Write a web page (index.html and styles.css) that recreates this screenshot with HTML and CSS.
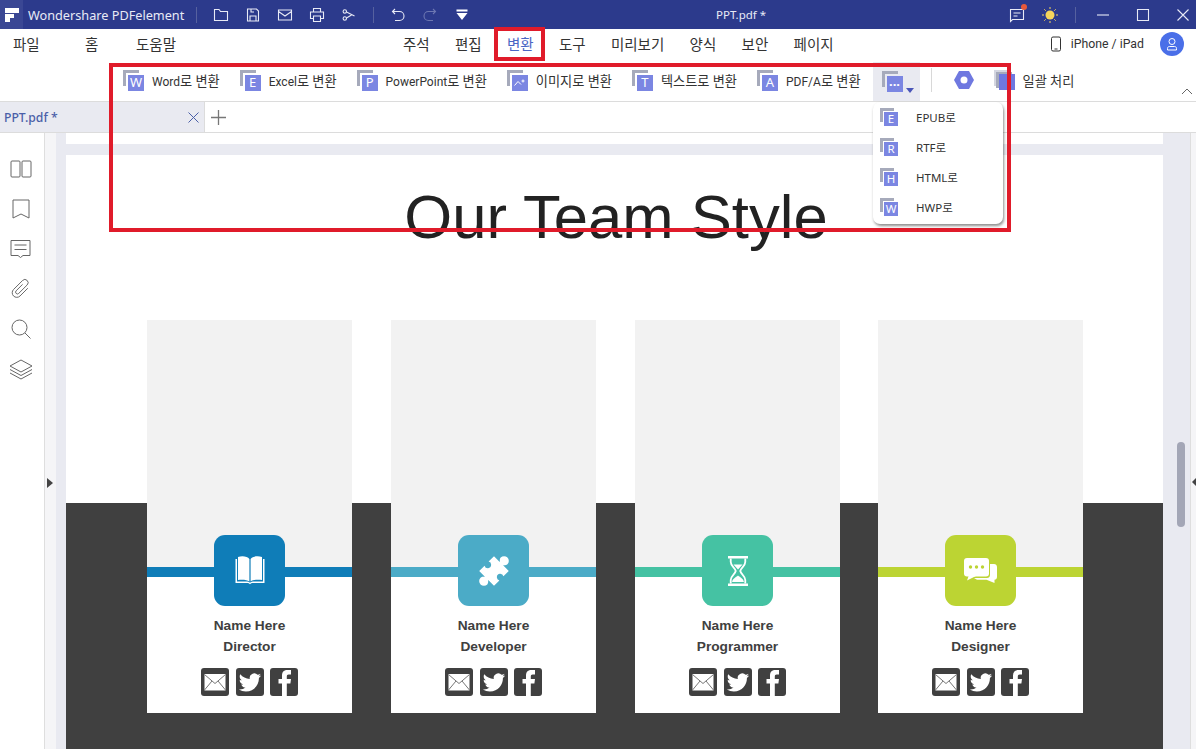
FILE: index.html

```html
<!DOCTYPE html>
<html lang="ko">
<head>
    <meta charset="UTF-8">
    <meta name="viewport" content="width=device-width, initial-scale=1.0">
    <title>PPT.pdf - Wondershare PDFelement</title>
    <link rel="stylesheet" href="styles.css">
</head>
<body>
    <svg class="sprite" width="0" height="0">
        <symbol id="i-mail" viewBox="0 0 28 28">
            <rect x="3.500" y="6" width="21" height="16.500" fill="#fff"/>
            <path d="M3.500 6.500 14 15.500 24.500 6.500M3.500 22 11 13M24.500 22 17 13" fill="none" stroke="#777" stroke-width="1"/>
        </symbol>
        <symbol id="i-twitter" viewBox="-3 -3.500 30 30">
            <path fill="#fff" d="M23.953 4.57a10 10 0 01-2.825.775 4.958 4.958 0 002.163-2.723c-.951.555-2.005.959-3.127 1.184a4.92 4.92 0 00-8.384 4.482C7.69 8.095 4.067 6.13 1.64 3.162a4.822 4.822 0 00-.666 2.475c0 1.71.87 3.213 2.188 4.096a4.904 4.904 0 01-2.228-.616v.06a4.923 4.923 0 003.946 4.827 4.996 4.996 0 01-2.212.085 4.936 4.936 0 004.604 3.417 9.867 9.867 0 01-6.102 2.105c-.39 0-.779-.023-1.17-.067a13.995 13.995 0 007.557 2.209c9.053 0 13.998-7.496 13.998-13.985 0-.21 0-.42-.015-.63A9.935 9.935 0 0024 4.59z"/>
        </symbol>
        <symbol id="i-facebook" viewBox="0 0 28 28">
            <path fill="#fff" d="M12 28V15.500H8.500v-4.500H12V7.500c0-3.800 2.200-5.500 5.600-5.500H21v4.500h-2.300c-1.400 0-1.900.7-1.900 2V11H21l-.6 4.500h-3.600V28z"/>
        </symbol>
    </svg>

    <div class="app">
        <header class="titlebar">
            <div class="title-left">
                <div class="logo">
                    <svg width="14" height="14" viewBox="0 0 14 14"><path fill="#fff" d="M0 0h14v5H0zM0 6h9v4H5v4H0z"/></svg>
                </div>
                <span class="app-name">Wondershare PDFelement</span>
                <span class="title-sep"></span>
                <div class="quick-tools">
                    <svg width="16" height="16" viewBox="0 0 16 16"><path d="M1.500 13.500v-11h4.500l1.500 2h7v9z"/></svg>
                    <svg width="16" height="16" viewBox="0 0 16 16"><path d="M2.500 2h9l2 2v10h-11zM5 14V9h6v5M6 2v3h3"/></svg>
                    <svg width="16" height="16" viewBox="0 0 16 16"><path d="M1.500 3h13v10h-13zM1.500 4.500 8 9l6.500-4.500"/></svg>
                    <svg width="16" height="16" viewBox="0 0 16 16"><path d="M4.500 5V1.500h7V5M4.500 11.500h-3V5h13v6.500h-3M4.500 9h7v5.500h-7z"/></svg>
                    <svg width="16" height="16" viewBox="0 0 16 16"><path d="M5.500 5 13.500 9M5.500 11l5-3"/><circle cx="3.800" cy="4.500" r="1.700"/><circle cx="3.800" cy="11.500" r="1.700"/></svg>
                    <span class="title-sep"></span>
                    <svg width="16" height="16" viewBox="0 0 16 16"><path d="M5 2 2.500 4.500 5 7M3 4.500h6.500a4 4 0 0 1 0 9H5"/></svg>
                    <svg class="dim" width="16" height="16" viewBox="0 0 16 16"><path d="M11 2l2.500 2.500L11 7M13 4.500H6.500a4 4 0 0 0 0 9H11"/></svg>
                    <svg class="solid" width="16" height="16" viewBox="0 0 16 16"><path d="M2.500 2.500h11v2h-11zM2.500 6h11L8 13z"/></svg>
                </div>
            </div>
            <span class="doc-title">PPT.pdf *</span>
            <div class="title-right">
                <span class="notice">
                    <svg width="16" height="16" viewBox="0 0 16 16"><path d="M1.500 2.500h13v10h-11l-2 2zM4.500 6h7M4.500 9h4"/></svg>
                    <i class="notice-dot"></i>
                </span>
                <svg class="sun" width="18" height="18" viewBox="0 0 18 18">
                    <circle cx="9" cy="9" r="4.500" fill="#f6d55c"/>
                    <path d="M9 1v2M9 15v2M1 9h2M15 9h2M3.300 3.300l1.400 1.400M13.300 13.300l1.400 1.400M3.300 14.700l1.400-1.400M13.300 4.700l1.400-1.400" stroke="#f6d55c" fill="none"/>
                </svg>
                <span class="title-sep"></span>
                <div class="win-buttons">
                    <svg width="14" height="14" viewBox="0 0 14 14"><path d="M1 7h12"/></svg>
                    <svg width="14" height="14" viewBox="0 0 14 14"><path d="M1.500 1.500h11v11h-11z"/></svg>
                    <svg width="14" height="14" viewBox="0 0 14 14"><path d="M1.500 1.500l11 11M12.500 1.500l-11 11"/></svg>
                </div>
            </div>
        </header>

        <nav class="menubar">
            <div class="menu-left">
                <a class="menu-file">파일</a>
                <a class="menu-home">홈</a>
                <a>도움말</a>
            </div>
            <div class="menu-tabs">
                <a>주석</a>
                <a>편집</a>
                <a class="active">변환</a>
                <a>도구</a>
                <a>미리보기</a>
                <a>양식</a>
                <a>보안</a>
                <a>페이지</a>
            </div>
            <div class="menu-right">
                <svg width="12" height="16" viewBox="0 0 12 16" fill="none" stroke="#333"><rect x="1.500" y="1" width="9" height="14" rx="1.500"/><path d="M4.500 13h3" /></svg>
                <span class="device-link">iPhone / iPad</span>
                <span class="avatar">
                    <svg width="14" height="14" viewBox="0 0 14 14" fill="none" stroke="#fff"><circle cx="7" cy="4.500" r="3"/><path d="M2.500 13v-1.500c0-1.500 1-2 2-2h5c1 0 2 .5 2 2V13z"/></svg>
                </span>
            </div>
        </nav>

        <div class="toolbar">
            <div class="tool"><span class="file-icon">W</span><span><b>Word</b>로 변환</span></div>
            <div class="tool"><span class="file-icon">E</span><span><b>Excel</b>로 변환</span></div>
            <div class="tool"><span class="file-icon">P</span><span><b>PowerPoint</b>로 변환</span></div>
            <div class="tool">
                <span class="file-icon">
                    <svg width="11" height="7" viewBox="0 0 11 7" fill="none" stroke="#fff"><path d="M.5 6.500 4 2.500l3 3"/><circle cx="9" cy="2" r="1"/></svg>
                </span><span>이미지로 변환</span>
            </div>
            <div class="tool"><span class="file-icon">T</span><span>텍스트로 변환</span></div>
            <div class="tool"><span class="file-icon">A</span><span><b>PDF/A</b>로 변환</span></div>
            <div class="tool-more">
                <span class="file-icon dots">···</span>
                <i class="more-caret"></i>
            </div>
            <span class="tool-sep"></span>
            <svg class="hex" width="20" height="18" viewBox="0 0 20 18"><path fill="#6f78e0" d="M5 0h10l5 9-5 9H5L0 9z"/><circle cx="10" cy="9" r="3.500" fill="#fff"/></svg>
            <div class="tool batch">
                <span class="batch-icon"></span><span>일괄 처리</span>
            </div>
            <svg class="collapse" width="12" height="7" viewBox="0 0 12 7" fill="none" stroke="#666"><path d="M1 6l5-5 5 5"/></svg>
        </div>

        <div class="tabbar">
            <div class="tab">
                <span class="tab-name">PPT.pdf *</span>
                <svg width="11" height="11" viewBox="0 0 11 11" fill="none" stroke="#4a5fa8"><path d="M.5.500l10 10M10.500.500l-10 10"/></svg>
            </div>
            <svg class="tab-add" width="15" height="15" viewBox="0 0 15 15" fill="none" stroke="#777" stroke-width="1.300"><path d="M7.500 0v15M0 7.500h15"/></svg>
        </div>

        <div class="workspace">
            <aside class="sidebar">
                <svg width="22" height="18" viewBox="0 0 22 18"><rect x="1" y="1" width="9" height="16" rx="1"/><rect x="12" y="1" width="9" height="16" rx="1"/></svg>
                <svg width="18" height="20" viewBox="0 0 18 20"><path d="M1 1h16v18l-8-4-8 4z"/></svg>
                <svg width="21" height="20" viewBox="0 0 21 20"><path d="M1 1.500h19v15h-7l-2.500 2-2.500-2H1zM4.500 6h12M4.500 10.500h12"/></svg>
                <svg width="22" height="22" viewBox="0 0 24 24"><path transform="rotate(45 12 11.500)" d="M10 7v10a2 2 0 0 0 4 0V4a3.500 3.500 0 0 0-7 0v14a5 5 0 0 0 10 0V6"/></svg>
                <svg width="20" height="20" viewBox="0 0 20 20"><circle cx="8.500" cy="8.500" r="7.500"/><path d="M14 14l5.500 5.500"/></svg>
                <svg width="24" height="21" viewBox="0 0 24 21"><path d="M12 1 23 7 12 13 1 7zM1 10.500 12 16.500 23 10.500M1 14 12 20 23 14"/></svg>
            </aside>
            <div class="side-panel"><i class="handle-left"></i></div>

            <main class="canvas">
                <div class="page-prev"></div>
                <section class="page">
                    <h1 class="page-title">Our Team Style</h1>
                    <div class="team">
                        <article class="member blue">
                            <div class="member-icon">
                                <svg width="32" height="30" viewBox="0 0 32 30" fill="#fff">
                                    <path d="M1.500 3v24h11.500c1.300 0 2.200.5 3 1.300.8-.8 1.700-1.300 3-1.300h11.500V3h-1.500v22.500H20c-1.500 0-3 .3-3.500 1H15.500c-.5-.7-2-1-3.500-1H3V3z"/>
                                    <path d="M4 24V1c4-1.200 9.500-.8 11.400 2v22.500C13 23.700 8 23.300 4 24zM28 24V1c-4-1.200-9.500-.8-11.400 2v22.500C19 23.700 24 23.300 28 24z"/>
                                </svg>
                            </div>
                            <p class="member-name">Name Here</p>
                            <p class="member-role">Director</p>
                            <div class="socials">
                                <svg><use href="#i-mail"/></svg>
                                <svg><use href="#i-twitter"/></svg>
                                <svg><use href="#i-facebook"/></svg>
                            </div>
                        </article>
                        <article class="member teal">
                            <div class="member-icon">
                                <svg width="34" height="34" viewBox="-17 -17 34 34" fill="#fff">
                                    <path transform="rotate(45) scale(.95)" d="M-11-11H-2.500C-3-12-5-13-5-15a5 5 0 0 1 10 0C5-13 3-12 2.500-11H11V-3A3.500 3.500 0 1 0 11 3V11H2.500C3 12 5 13 5 15a5 5 0 0 1-10 0C-5 13-3 12-2.500 11H-11V3A3.500 3.500 0 1 0-11-3Z"/>
                                </svg>
                            </div>
                            <p class="member-name">Name Here</p>
                            <p class="member-role">Developer</p>
                            <div class="socials">
                                <svg><use href="#i-mail"/></svg>
                                <svg><use href="#i-twitter"/></svg>
                                <svg><use href="#i-facebook"/></svg>
                            </div>
                        </article>
                        <article class="member green">
                            <div class="member-icon">
                                <svg width="20" height="30" viewBox="0 0 22 30" preserveAspectRatio="none">
                                    <path fill="#fff" d="M0 0h22v2.500H0zM0 27.500h22V30H0z"/>
                                    <path fill="none" stroke="#fff" stroke-width="2" d="M3 2.500v3.500c0 4 5 6 5.500 9-.5 3-5.500 5-5.500 9v3.500M19 2.500v3.500c0 4-5 6-5.500 9 .5 3 5.500 5 5.500 9v3.500"/>
                                    <path fill="#fff" d="M6 8.500h10L11 13.500zM4.500 26c.5-3.500 4-4.500 6.500-6.500 2.500 2 6 3 6.500 6.500z"/>
                                </svg>
                            </div>
                            <p class="member-name">Name Here</p>
                            <p class="member-role">Programmer</p>
                            <div class="socials">
                                <svg><use href="#i-mail"/></svg>
                                <svg><use href="#i-twitter"/></svg>
                                <svg><use href="#i-facebook"/></svg>
                            </div>
                        </article>
                        <article class="member lime">
                            <div class="member-icon">
                                <svg width="33" height="26" viewBox="0 0 33 26">
                                    <path fill="#fff" d="M26 6h4c1.700 0 3 1 3 3v10c0 1.600-1 2.700-2.500 2.800V25l-8-3.200H13l-3-1.800h13c1.700 0 3-1.300 3-3z"/>
                                    <rect width="25" height="18.500" rx="3" fill="#fff"/>
                                    <path fill="#fff" d="M5 17h9L3 22.500z"/>
                                    <circle cx="6.500" cy="9" r="1.700" fill="#bcd433"/>
                                    <circle cx="12.500" cy="9" r="1.700" fill="#bcd433"/>
                                    <circle cx="18.500" cy="9" r="1.700" fill="#bcd433"/>
                                </svg>
                            </div>
                            <p class="member-name">Name Here</p>
                            <p class="member-role">Designer</p>
                            <div class="socials">
                                <svg><use href="#i-mail"/></svg>
                                <svg><use href="#i-twitter"/></svg>
                                <svg><use href="#i-facebook"/></svg>
                            </div>
                        </article>
                    </div>
                </section>
                <div class="scroll-thumb"></div>
            </main>
            <div class="right-panel"><i class="handle-right"></i></div>
        </div>
    </div>

    <div class="more-menu">
        <div class="more-item"><span class="file-icon small">E</span>EPUB로</div>
        <div class="more-item"><span class="file-icon small">R</span>RTF로</div>
        <div class="more-item"><span class="file-icon small">H</span>HTML로</div>
        <div class="more-item"><span class="file-icon small">W</span>HWP로</div>
    </div>

    <div class="callout callout-tab"></div>
    <div class="callout callout-tools"></div>
</body>
</html>
```

FILE: styles.css

```css
* {
    box-sizing: border-box;
}
html, body {
    margin: 0;
    height: 100%;
    overflow: hidden;
}
body {
    position: relative;
    font-family: "Noto Sans", "Noto Sans CJK KR", sans-serif;
    color: #333;
    background: #fff;
}
.sprite {
    position: absolute;
}
.app {
    display: flex;
    flex-direction: column;
    height: 749px;
}

/* title bar */
.titlebar {
    display: flex;
    align-items: center;
    flex: 0 0 29px;
    background: #2c3a8c;
    color: #e8eaf6;
    font-size: 12.700px;
}
.title-left {
    display: flex;
    align-items: center;
    width: 716px;
}
.logo {
    display: flex;
    align-items: center;
    justify-content: center;
    width: 23px;
    height: 29px;
    background: #3a4794;
}
.app-name {
    margin-left: 5px;
    width: 168px;
    white-space: nowrap;
}
.title-sep {
    width: 1px;
    height: 16px;
    background: #56619f;
}
.quick-tools {
    display: flex;
    align-items: center;
    gap: 16px;
    margin-left: 16px;
}
.quick-tools svg, .notice svg, .win-buttons svg {
    fill: none;
    stroke: #e8eaf6;
    stroke-width: 1.100;
}
.quick-tools svg.dim {
    stroke: #6d77b2;
}
.quick-tools svg.solid {
    fill: #fff;
    stroke: none;
}
.doc-title {
    width: 50px;
    font-size: 11.500px;
    white-space: nowrap;
}
.title-right {
    display: flex;
    align-items: center;
    margin-left: auto;
}
.notice {
    position: relative;
    display: flex;
    margin-right: 16px;
}
.notice-dot {
    position: absolute;
    top: -3px;
    right: -2px;
    width: 6px;
    height: 6px;
    border-radius: 50%;
    background: #e8593a;
}
.sun {
    margin-right: 16px;
}
.win-buttons {
    display: flex;
    gap: 26px;
    margin: 0 6px 0 20px;
}

/* menu row */
.menubar {
    display: flex;
    align-items: center;
    flex: 0 0 33px;
    padding: 0 12px 4px 13px;
    font-size: 14.500px;
    color: #333;
}
.menu-left {
    display: flex;
    width: 390px;
}
.menu-file {
    width: 72px;
}
.menu-home {
    width: 51px;
}
.menu-tabs {
    display: flex;
    gap: 25.300px;
}
.menu-tabs .active {
    color: #4a66c4;
}
.menu-right {
    display: flex;
    align-items: center;
    margin-left: auto;
}
.device-link {
    margin: 0 16px 0 9px;
    font-family: Roboto, sans-serif;
    font-size: 12.300px;
}
.avatar {
    display: flex;
    align-items: center;
    justify-content: center;
    width: 24px;
    height: 24px;
    border-radius: 50%;
    background: #4a6fe8;
}

/* ribbon */
.toolbar {
    position: relative;
    display: flex;
    align-items: center;
    flex: 0 0 40px;
    padding: 0 0 3px 123px;
    border-bottom: 1px solid #dcdcdc;
    font-family: Roboto, "Noto Sans CJK KR", sans-serif;
    font-size: 13.200px;
    color: #333;
}
.tool {
    display: flex;
    align-items: center;
    gap: 8px;
    margin-right: 20px;
    white-space: nowrap;
}
.tool b {
    font-size: 12px;
    font-weight: 400;
}
.file-icon {
    position: relative;
    flex: none;
    display: flex;
    align-items: center;
    justify-content: center;
    width: 21px;
    height: 21px;
    padding: 5px 0 0 5px;
    font-family: "Noto Sans", sans-serif;
    font-size: 13px;
    line-height: 1;
    color: #fff;
    background:
        linear-gradient(#7b86e2, #7b86e2) 5px 5px / 16px 16px no-repeat,
        linear-gradient(#a6aabb, #a6aabb) 0 0 / 16px 3px no-repeat,
        linear-gradient(#a6aabb, #a6aabb) 0 0 / 3px 16px no-repeat;
}
.file-icon.small {
    width: 18px;
    height: 18px;
    padding: 4px 0 0 4px;
    font-size: 11.500px;
    background:
        linear-gradient(#7b86e2, #7b86e2) 4px 4px / 14px 14px no-repeat,
        linear-gradient(#a6aabb, #a6aabb) 0 0 / 14px 3px no-repeat,
        linear-gradient(#a6aabb, #a6aabb) 0 0 / 3px 14px no-repeat;
}
.file-icon.dots {
    font-weight: 700;
}
.tool-more {
    display: flex;
    align-items: flex-end;
    align-self: stretch;
    width: 47px;
    margin: 0 0 -3px -8px;
    padding: 8px 0 9px 9px;
    background: #e9eaf1;
}
.more-caret {
    margin: 0 0 -1px 3px;
    border: 4px solid transparent;
    border-top: 5px solid #4a55b8;
    border-bottom: 0;
}
.tool-sep {
    width: 1px;
    height: 24px;
    margin: 0 22px 0 11px;
    background: #d8d8d8;
}
.hex {
    margin-right: 20px;
}
.batch-icon {
    flex: none;
    width: 21px;
    height: 20px;
    background:
        linear-gradient(#6f78e0, #6f78e0) 5px 4px / 16px 16px no-repeat,
        linear-gradient(#a6aabb, #a6aabb) 2px 2px / 16px 16px no-repeat,
        linear-gradient(#d4d6e0, #d4d6e0) 0 0 / 16px 16px no-repeat;
}
.collapse {
    position: absolute;
    right: 3px;
    top: 26px;
}

/* tabs */
.tabbar {
    display: flex;
    align-items: center;
    flex: 0 0 31px;
    border-bottom: 1px solid #dcdcdc;
}
.tab {
    display: flex;
    align-items: center;
    justify-content: space-between;
    width: 205px;
    height: 100%;
    padding: 0 5px 0 4px;
    background: #e9eaf1;
    border-right: 1px solid #dcdcdc;
}
.tab-name {
    font-size: 12.200px;
    font-weight: 500;
    color: #4a5fa8;
}
.tab-add {
    margin-left: 6px;
}

/* main area */
.workspace {
    display: flex;
    flex: 1;
    min-height: 0;
}
.sidebar {
    display: grid;
    grid-auto-rows: 40px;
    align-items: center;
    justify-items: center;
    flex: 0 0 45px;
    padding: 16px 3px 0 0;
    border-right: 1px solid #dedede;
}
.sidebar svg {
    fill: none;
    stroke: #666;
    stroke-width: 1;
}
.side-panel {
    position: relative;
    flex: 0 0 11px;
    background: #f5f5f7;
}
.handle-left {
    position: absolute;
    top: 345px;
    left: 2px;
    border: 5px solid transparent;
    border-left: 6px solid #444;
    border-right: 0;
}
.canvas {
    position: relative;
    flex: 1;
    padding: 0 27px 0 10px;
    background: #e9eaf1;
    overflow: hidden;
}
.page-prev {
    height: 11px;
    margin-bottom: 11px;
    background: #fff;
}
.page {
    padding-top: 22px;
    background: #fff;
}
.page-title {
    margin: 0 0 63px;
    padding-left: 3px;
    font-family: "Liberation Sans", Arial, sans-serif;
    font-size: 61.600px;
    font-weight: 400;
    line-height: 80px;
    text-align: center;
    color: #222;
}
.scroll-thumb {
    position: absolute;
    top: 309px;
    right: 5px;
    width: 8px;
    height: 85px;
    border-radius: 4px;
    background: #a3a6b6;
}
.right-panel {
    position: relative;
    flex: 0 0 6px;
    background: #f5f5f7;
    border-left: 1px solid #dedede;
}
.handle-right {
    position: absolute;
    top: 345px;
    left: 1px;
    border: 4px solid transparent;
    border-right: 4px solid #444;
    border-left: 0;
}

/* team slide */
.team {
    display: grid;
    grid-template-columns: 244px 244px 243px 205px;
    padding: 0 80px 60px 81px;
    background: linear-gradient(#fff 183px, #404040 183px);
}
.member {
    --accent: #0f7db8;
    display: flex;
    flex-direction: column;
    align-items: center;
    width: 205px;
    height: 393px;
    padding-top: 215px;
    background: linear-gradient(#f2f2f2 247px, var(--accent) 247px, var(--accent) 257px, #fff 257px);
}
.member.teal {
    --accent: #4babc7;
}
.member.green {
    --accent: #45c2a3;
}
.member.lime {
    --accent: #bcd433;
}
.member-icon {
    display: flex;
    align-items: center;
    justify-content: center;
    width: 71px;
    height: 71px;
    margin-bottom: 9px;
    border-radius: 11px;
    background: var(--accent);
}
.member p {
    margin: 0;
    font-family: "Liberation Sans", Arial, sans-serif;
    font-size: 13.700px;
    font-weight: 700;
    line-height: 21px;
    color: #404040;
}
.socials {
    display: flex;
    gap: 6.500px;
    margin-top: 11px;
}
.socials svg {
    width: 28px;
    height: 28px;
    border-radius: 3px;
    background: #404040;
}

/* dropdown under the ... button */
.more-menu {
    position: absolute;
    top: 102px;
    left: 873px;
    width: 130px;
    height: 122px;
    padding: 0 7px;
    border-radius: 7px;
    background: #fff;
    box-shadow: 1px 2px 3px rgba(0, 0, 0, 0.45);
    font-size: 11.500px;
    color: #333;
}
.more-item {
    display: flex;
    align-items: center;
    gap: 18px;
    height: 30px;
}

/* red highlight boxes drawn on the screenshot */
.callout {
    position: absolute;
    border: 4px solid #e01b2a;
    pointer-events: none;
}
.callout-tab {
    top: 27px;
    left: 494px;
    width: 51px;
    height: 34px;
}
.callout-tools {
    top: 63px;
    left: 109px;
    width: 902px;
    height: 169px;
}
```
